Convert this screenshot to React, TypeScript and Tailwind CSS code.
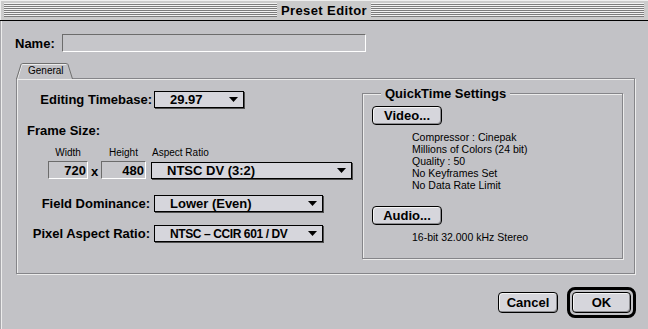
import React from "react"

const stripes =
  "bg-[repeating-linear-gradient(to_bottom,#f2f2f2_0px,#f2f2f2_1px,#7c7c7c_1px,#7c7c7c_2px)]"

function Arrow() {
  return (
    <svg width="9" height="5" viewBox="0 0 9 5" className="shrink-0">
      <polygon points="0,0 9,0 4.5,5" fill="#000" />
    </svg>
  )
}

function Popup({ value, className, textClass = "" }: { value: string; className: string; textClass?: string }) {
  return (
    <div
      className={`${className} h-[17px] flex items-center justify-between pl-[15px] pr-[5px] bg-[#d6d6dc] border border-black shadow-[1px_1px_0_#505050] text-[13px] font-bold leading-none`}
    >
      <span className={`whitespace-nowrap ${textClass}`}>{value}</span>
      <Arrow />
    </div>
  )
}

function Button({ label, className }: { label: string; className: string }) {
  return (
    <button
      type="button"
      className={`${className} flex items-center justify-center rounded-[4px] border border-black bg-[#d6d6dc] shadow-[inset_1px_1px_0_#f4f4f4,inset_-1px_-1px_0_#8c8c90] text-[13px] font-bold leading-none`}
    >
      {label}
    </button>
  )
}

function Field({ value, className }: { value?: string; className: string }) {
  return (
    <div
      className={`${className} h-[18px] flex items-center justify-end pr-[1px] bg-[#c8c8cc] border-t border-l border-[#6c6c6c] border-r-white border-b-white border-r border-b text-[13px] font-bold leading-none`}
    >
      {value}
    </div>
  )
}

export default function App() {
  return (
    <div className="w-[648px] h-[329px] overflow-hidden flex flex-col bg-[#c2c2c6] text-black font-['Liberation_Sans',Arial,sans-serif]">
      {/* Title bar */}
      <div className="h-[21px] shrink-0 bg-[#cbcbcb] border-b border-black flex items-center px-[4px] shadow-[inset_1px_1px_0_#efefef]">
        <div className={`flex-1 h-[14px] ${stripes}`} />
        <div className="px-[4px] text-[13px] font-bold tracking-[0.4px] leading-none">Preset Editor</div>
        <div className={`flex-1 h-[14px] ${stripes}`} />
      </div>

      {/* Body */}
      <div className="flex-1 flex flex-col pl-[15px] shadow-[inset_1px_0_0_#a8a8ac,inset_2px_0_0_#ececec]">
        {/* Name */}
        <div className="mt-[13px] flex items-center">
          <span className="w-[47px] text-[13px] font-bold leading-none">Name:</span>
          <div className="w-[304px] h-[18px] bg-[#c6c6ca] border-t border-l border-[#6c6c6c] border-r border-b border-r-white border-b-white" />
        </div>

        {/* Tab */}
        <div className="mt-[11px] ml-[1px] relative z-10 -mb-[1px] w-[57px] h-[16px] flex items-center">
          <svg width="57" height="16" viewBox="0 0 57 16" className="absolute inset-0">
            <path d="M0.5,16 L5,1.5 Q5.5,0.5 6.5,0.5 L50.5,0.5 Q51.5,0.5 52,1.5 L56.5,16 Z" fill="#c2c2c6" />
            <path d="M1.5,16 L5.8,2 Q6.2,1.5 7,1.5 L50,1.5" fill="none" stroke="#ececec" />
            <path d="M0.5,16 L5,1.5 Q5.5,0.5 6.5,0.5 L50.5,0.5 Q51.5,0.5 52,1.5 L56.5,16" fill="none" stroke="#6f6f6f" />
          </svg>
          <span className="relative pl-[12px] text-[10px] leading-none">General</span>
        </div>

        {/* Tab panel */}
        <div className="ml-[1px] w-[619px] h-[196px] border border-[#858589] shadow-[inset_1px_1px_0_#ececec,1px_1px_0_#ececec] flex">
          {/* Left column */}
          <div className="w-[345px] flex flex-col">
            <div className="mt-[12px] flex items-center">
              <span className="w-[135px] text-right text-[13px] font-bold leading-none">Editing Timebase:</span>
              <Popup value="29.97" className="ml-[2px] w-[90px]" />
            </div>

            <div className="mt-[15px] pl-[10px] text-[13px] font-bold leading-[16px]">Frame Size:</div>

            <div className="ml-[31px] mt-[8px] flex text-[10px] leading-[12px]">
              <span className="w-[40px] text-center">Width</span>
              <span className="w-[13px]" />
              <span className="w-[45px] text-center">Height</span>
              <span className="ml-[6px]">Aspect Ratio</span>
            </div>

            <div className="ml-[31px] mt-[2px] flex items-center">
              <Field value="720" className="w-[40px]" />
              <span className="w-[13px] pt-[3px] text-center text-[13px] font-bold leading-none">x</span>
              <Field value="480" className="w-[45px]" />
              <Popup value="NTSC DV (3:2)" className="ml-[5px] w-[201px]" />
            </div>

            <div className="mt-[16px] flex items-center">
              <span className="w-[133px] text-right text-[13px] font-bold leading-none">Field Dominance:</span>
              <Popup value="Lower (Even)" className="ml-[4px] w-[169px]" />
            </div>

            <div className="mt-[13px] flex items-center">
              <span className="w-[133px] text-right text-[13px] font-bold leading-none">Pixel Aspect Ratio:</span>
              <Popup
                value="NTSC – CCIR 601 / DV"
                className="ml-[4px] w-[169px]"
                textClass="text-[12px] tracking-[-0.4px]"
              />
            </div>
          </div>

          {/* QuickTime settings */}
          <fieldset className="mt-[7px] self-start w-[261px] border border-[#858589] shadow-[inset_1px_1px_0_#ececec,1px_1px_0_#ececec] pl-[9px] pb-[15px]">
            <legend className="ml-[9px] px-[4px] bg-[#c2c2c6] text-[13px] font-bold leading-[15px]">QuickTime Settings</legend>
            <Button label="Video..." className="mt-[5px] w-[70px] h-[19px]" />
            <div className="mt-[6px] ml-[40px] text-[10.5px] leading-[12px]">
              <div>Compressor : Cinepak</div>
              <div>Millions of Colors (24 bit)</div>
              <div>Quality : 50</div>
              <div>No Keyframes Set</div>
              <div>No Data Rate Limit</div>
            </div>
            <Button label="Audio..." className="mt-[15px] w-[70px] h-[19px]" />
            <div className="mt-[6px] ml-[40px] text-[10.5px] leading-[12px]">16-bit 32.000 kHz Stereo</div>
          </fieldset>
        </div>

        {/* Dialog buttons */}
        <div className="mt-[13px] flex items-center justify-end pr-[12px]">
          <Button label="Cancel" className="w-[60px] h-[21px]" />
          <div className="ml-[9px] rounded-[8px] border-[3px] border-black p-[2px]">
            <Button label="OK" className="w-[59px] h-[21px]" />
          </div>
        </div>
      </div>
    </div>
  )
}
